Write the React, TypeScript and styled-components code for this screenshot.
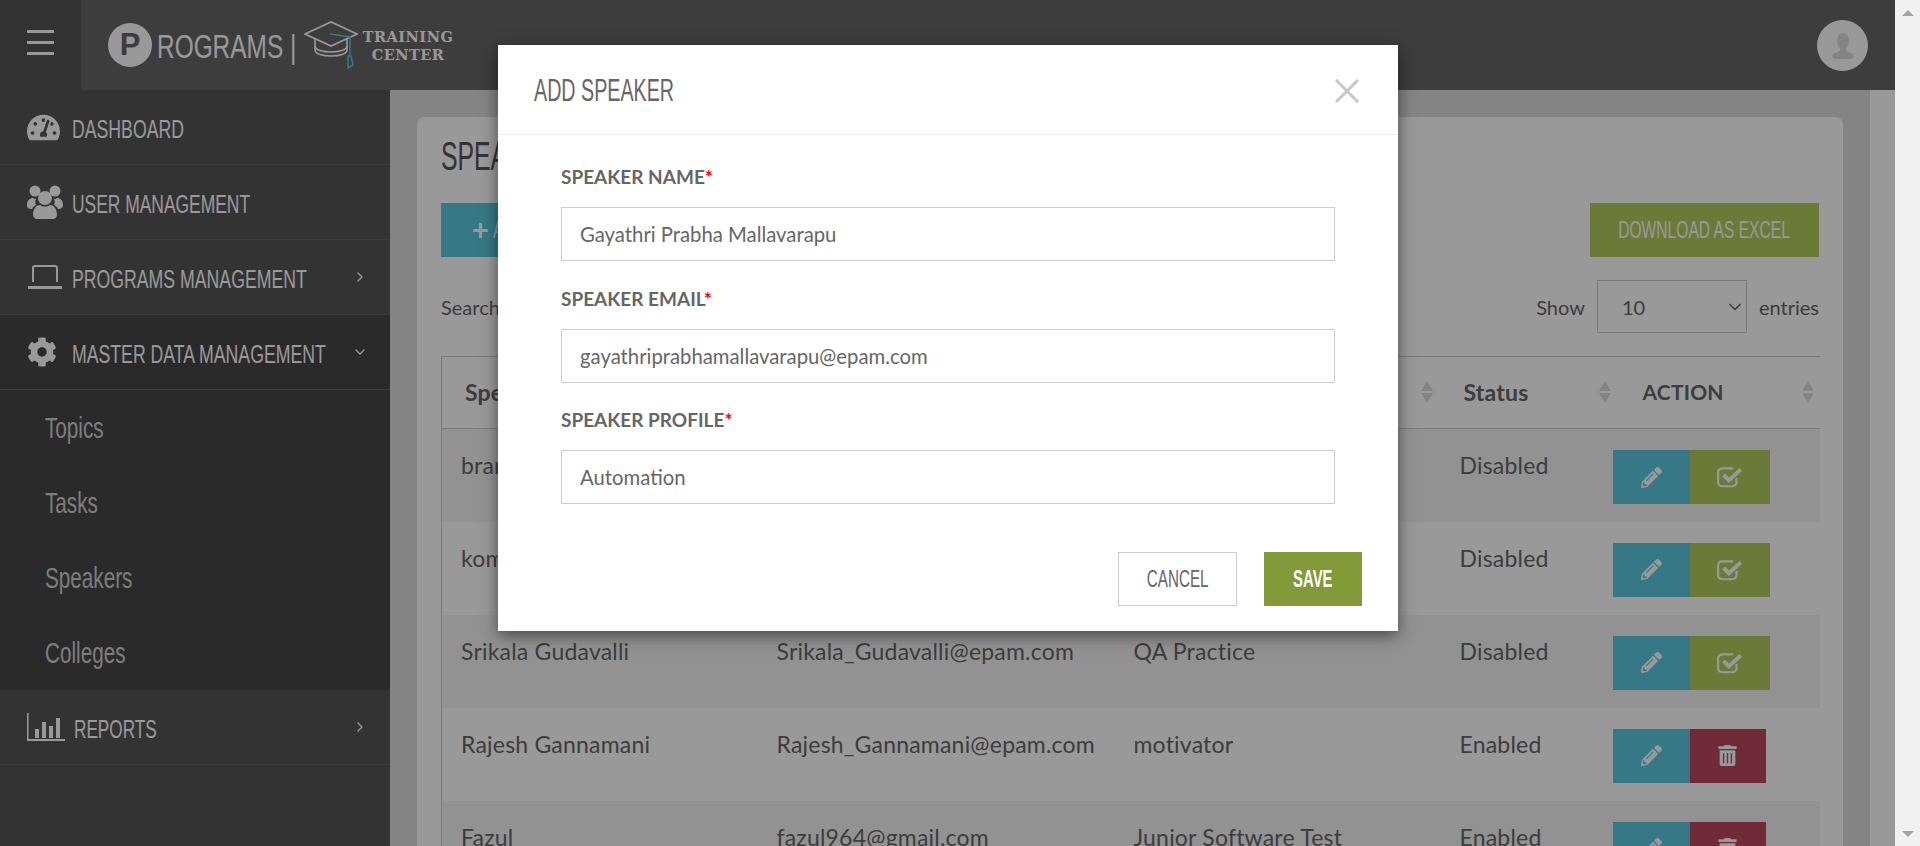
import React from "react";
import styled, { createGlobalStyle } from "styled-components";
import { FaTachometerAlt, FaCog, FaPencilAlt, FaTrashAlt, FaPlus } from "react-icons/fa";
import { FiChevronRight, FiChevronDown } from "react-icons/fi";

const GlobalStyle = createGlobalStyle`
  html, body { margin: 0; padding: 0; height: 100%; overflow: hidden; }
  body { font-family: "Lato", "Noto Sans", sans-serif; background: #f1f1f1; }
  * { box-sizing: border-box; }
`;

const Shell = styled.div`
  display: flex;
  height: 846px;
  width: 1920px;
  overflow: hidden;
`;

const Viewport = styled.div`
  position: relative;
  width: 1895px;
  height: 846px;
  overflow: hidden;
  background: #fff;
`;

const ScrollBar = styled.div`
  width: 25px;
  height: 846px;
  background: #f1f1f1;
  display: flex;
  flex-direction: column;
  justify-content: space-between;
  align-items: center;
  padding: 10px 0 9px;
`;

const Arrow = styled.span<{ $down?: boolean }>`
  width: 0;
  height: 0;
  border-left: 6px solid transparent;
  border-right: 6px solid transparent;
  ${({ $down }) =>
    $down ? "border-top: 6px solid #a3a3a3;" : "border-bottom: 6px solid #a3a3a3;"}
`;

// condensed heading face: no Oswald here, so Liberation Sans squeezed sideways
const Squeeze = styled.span<{ $size: number; $x: number; $origin?: string; $bold?: boolean }>`
  display: inline-block;
  font-family: "Liberation Sans", sans-serif;
  font-size: ${({ $size }) => $size}px;
  font-weight: ${({ $bold }) => ($bold ? "bold" : "normal")};
  line-height: 1;
  white-space: nowrap;
  transform: scaleX(${({ $x }) => $x});
  transform-origin: ${({ $origin }) => $origin || "left"} center;
`;

const Header = styled.header`
  height: 90px;
  background: #666;
  display: flex;
`;

const MenuCell = styled.div`
  width: 81px;
  background: #555;
  display: flex;
  flex-direction: column;
  gap: 8px;
  padding: 30px 0 0 27px;
`;

const MenuLine = styled.span`
  width: 27px;
  height: 3px;
  background: #fff;
`;

const Logo = styled.div`
  display: flex;
  align-items: center;
  padding-left: 27px;
  color: #fff;
`;

const LogoCircle = styled.span`
  width: 44px;
  height: 44px;
  border-radius: 50%;
  background: #fff;
  color: #666;
  font: bold 31px/44px "Liberation Sans", sans-serif;
  text-align: center;
  margin-right: 5px;
`;

const LogoWord = styled.div`
  width: 147px;
  margin-top: 3px;
`;

const LogoTraining = styled.div`
  font: bold 14.5px/17.500px "DejaVu Serif", serif;
  letter-spacing: 0.5px;
  text-align: center;
  width: 100px;
  margin: 1px 0 0;
`;

const Avatar = styled.div`
  margin: 20px 27px 0 auto;
  width: 51px;
  height: 51px;
  border-radius: 50%;
  background: #fff;
  display: flex;
  align-items: center;
  justify-content: center;
`;

const Layout = styled.div`
  display: flex;
  height: 756px;
`;

const Sidebar = styled.nav`
  width: 390px;
  flex: none;
  background: #555;
  color: #fff;
`;

const NavItem = styled.div`
  height: 75px;
  display: flex;
  align-items: center;
  padding: 0 22px 0 27px;
  border-bottom: 1px solid #616161;
`;

const NavIcon = styled.span<{ $gap?: number }>`
  width: ${({ $gap }) => $gap || 45}px;
  flex: none;
  display: flex;
  align-items: center;
  font-size: 33px;
`;

const NavText = styled.span`
  flex: 1;
  min-width: 0;
  margin-top: 3px;
`;

const NavGroup = styled.div`
  background: #464646;
`;

const SubItem = styled.div`
  height: 75px;
  padding-left: 45px;
  display: flex;
  align-items: center;
  color: #d0d0d0;
`;

const Main = styled.main`
  width: 1480px;
  background: #dcdcdc;
  padding: 27px 27px 0;
  overflow: hidden;
`;

const Card = styled.section`
  background: #fff;
  border-radius: 8px 8px 0 0;
  padding: 17px 24px 0;
  height: 800px;
  color: #666;
`;

const Title = styled.h1`
  margin: 0;
  padding-bottom: 26px;
  font-weight: normal;
  height: 69px;
  color: #555;
  display: flex;
  align-items: center;
`;

const ActionBar = styled.div`
  display: flex;
  justify-content: space-between;
`;

const AddButton = styled.button`
  width: 200px;
  height: 54px;
  border: 0;
  padding: 0 0 0 31px;
  background: #5ac9de;
  color: #fff;
  display: flex;
  align-items: center;
  gap: 4px;
  svg {
    flex: none;
  }
`;

const ExcelButton = styled.button`
  width: 229px;
  height: 54px;
  border: 0;
  padding: 0;
  background: #b4cb5d;
  color: #fff;
  display: flex;
  align-items: center;
  justify-content: center;
`;

const FilterRow = styled.div`
  display: flex;
  align-items: center;
  justify-content: space-between;
  height: 53px;
  margin-top: 23px;
  font-size: 20px;
`;

const Entries = styled.div`
  display: flex;
  align-items: center;
  gap: 12px;
`;

const FakeSelect = styled.div`
  width: 150px;
  height: 53px;
  border: 1px solid #ccc;
  display: flex;
  align-items: center;
  justify-content: space-between;
  padding: 0 1px 0 24px;
`;

const Table = styled.table`
  width: 1378px;
  margin-top: 23px;
  border-collapse: collapse;
  table-layout: fixed;
  border-top: 1px solid #ccc;
  border-left: 1px solid #ccc;
  font-size: 23px;
  letter-spacing: 0.2px;
`;

const HeadCell = styled.th<{ $left: number; $right: number; $size: number }>`
  height: 72px;
  padding: 0 ${({ $right }) => $right}px 2px ${({ $left }) => $left}px;
  border-bottom: 1px solid #ccc;
  font-size: ${({ $size }) => $size}px;
  font-weight: bold;
  text-align: left;
`;

const HeadInner = styled.div`
  display: flex;
  align-items: center;
  justify-content: space-between;
`;

const Row = styled.tr<{ $odd: boolean }>`
  height: 93px;
  background: ${({ $odd }) => ($odd ? "#f4f4f4" : "#fff")};
`;

const Cell = styled.td<{ $left?: number }>`
  padding: 22px 0 0 ${({ $left }) => $left ?? 19}px;
  vertical-align: top;
  white-space: nowrap;
  overflow: hidden;
`;

const ActionCell = styled.td`
  padding: 21px 0 0;
  vertical-align: top;
`;

const ActionGroup = styled.div`
  display: flex;
`;

const IconButton = styled.button<{ $bg: string; $width: number }>`
  width: ${({ $width }) => $width}px;
  height: 54px;
  border: 0;
  padding: 0;
  background: ${({ $bg }) => $bg};
  color: #fff;
  font-size: 21px;
  display: flex;
  align-items: center;
  justify-content: center;
`;

const Overlay = styled.div`
  position: absolute;
  inset: 0;
  background: rgba(0, 0, 0, 0.4);
`;

const Modal = styled.div`
  position: absolute;
  left: 498px;
  top: 45px;
  width: 900px;
  height: 586px;
  background: #fff;
  box-shadow: 0 5px 15px rgba(0, 0, 0, 0.5);
  color: #666;
`;

const ModalHeader = styled.div`
  height: 90px;
  border-bottom: 1px solid #eee;
  display: flex;
  align-items: center;
  justify-content: space-between;
  padding: 2px 39px 0 36px;
`;

const ModalBody = styled.div`
  padding: 28px 63px 0;
  display: flex;
  flex-direction: column;
  gap: 23.700px;
`;

const Field = styled.div`
  display: flex;
  flex-direction: column;
`;

const FieldLabel = styled.label`
  font-size: 19px;
  font-weight: bold;
  line-height: 28px;
  margin-bottom: 16px;
  text-transform: uppercase;
`;

const Required = styled.span`
  color: #f00;
`;

const FieldInput = styled.input`
  height: 54px;
  width: 100%;
  border: 1px solid #ccc;
  padding: 0 18px;
  font: 20.3px "Lato", sans-serif;
  color: #666;
  outline: 0;
`;

const ModalFooter = styled.div`
  display: flex;
  justify-content: flex-end;
  gap: 27px;
  padding: 48px 36px 0 0;
`;

const CancelButton = styled.button`
  width: 119px;
  height: 54px;
  background: #fff;
  border: 1px solid #ccc;
  color: #666;
  padding: 0;
`;

const SaveButton = styled.button`
  width: 98px;
  height: 54px;
  background: #829a38;
  border: 0;
  color: #fff;
  padding: 0;
`;

const teal = "#5ac9de";
const olive = "#b4cb5d";
const crimson = "#bb4661";

const rows = [
  { name: "bran", email: "", profile: "", status: "Disabled" },
  { name: "kom", email: "", profile: "", status: "Disabled" },
  { name: "Srikala Gudavalli", email: "Srikala_Gudavalli@epam.com", profile: "QA Practice", status: "Disabled" },
  { name: "Rajesh Gannamani", email: "Rajesh_Gannamani@epam.com", profile: "motivator", status: "Enabled" },
  { name: "Fazul", email: "fazul964@gmail.com", profile: "Junior Software Test", status: "Enabled" },
];

const columns = [
  { label: "Speaker Name", left: 23, right: 8, size: 23 },
  { label: "Speaker Email", left: 19, right: 8, size: 23 },
  { label: "Speaker Profile", left: 19, right: 8, size: 23 },
  { label: "Status", left: 22, right: 1, size: 23 },
  { label: "ACTION", left: 30, right: 5, size: 21 },
];

const SortIcon = () => (
  <svg width="14" height="24" viewBox="0 0 14 24" fill="#ddd">
    <path d="M7 1l6 10H1zM7 23l-6-10h12z" />
  </svg>
);

const UsersIcon = () => (
  <svg width="36" height="34" viewBox="0 0 36 34" fill="currentColor">
    <circle cx="8" cy="6" r="5.500" />
    <circle cx="28" cy="6" r="5.500" />
    <circle cx="18" cy="13" r="7" />
    <path d="M0 20c0-5 3-7 6-7 1 1 2 1 3 1-1 2-1 4 0 6-2 1-3 2-4 4-3 0-5-1-5-4z" />
    <path d="M36 20c0-5-3-7-6-7-1 1-2 1-3 1 1 2 1 4 0 6 2 1 3 2 4 4 3 0 5-1 5-4z" />
    <path d="M6 30c0-6 3-10 7-10 3 2 7 2 10 0 4 0 7 4 7 10 0 2-2 4-4 4H10c-2 0-4-2-4-4z" />
  </svg>
);

const LaptopIcon = () => (
  <svg width="36" height="24" viewBox="0 0 36 24" fill="none" stroke="currentColor" strokeWidth="2">
    <path d="M6 17V3a2 2 0 0 1 2-2h20a2 2 0 0 1 2 2v14" />
    <path d="M1 22.500h34" strokeWidth="3" />
  </svg>
);

const BarsIcon = () => (
  <svg width="38" height="28" viewBox="0 0 38 28" fill="currentColor">
    <path d="M0 0h1.500v26H38v2H0z" />
    <path d="M8 16h4v9H8zM15 9h4v16h-4zM22 13h4v12h-4zM29 5h4v20h-4z" />
  </svg>
);

const CheckSquareIcon = () => (
  <svg width="26" height="22" viewBox="0 0 24 20" fill="none" stroke="currentColor">
    <path d="M18 11v4a3.500 3.500 0 0 1-3.500 3.500H4.500A3.500 3.500 0 0 1 1 15V5.500A3.500 3.500 0 0 1 4.500 2H15" strokeWidth="2" />
    <path d="M6 8l5 5L22 3" strokeWidth="3.600" />
  </svg>
);

const CapIcon = () => (
  <svg width="54" height="48" viewBox="0 0 54 48" fill="none" stroke="#fff" strokeWidth="1.600">
    <path d="M1 13 27 1l26 12-26 12z" />
    <path d="M11 18v11c0 8 32 8 32 0V18" />
    <path d="M11 25c0 8 32 8 32 0" />
    <path d="M26 13l20 3v18" stroke="#5ac9de" />
    <path d="M44 35h3l2 9-5 3z" stroke="#5ac9de" />
  </svg>
);

const PersonIcon = () => (
  <svg width="22" height="26" viewBox="0 0 22 26" fill="#dcdcdc">
    <ellipse cx="11" cy="8" rx="6" ry="8" />
    <path d="M8 14h6v4l7 3c1 2 1 5-2 5H3c-3 0-3-3-2-5l7-3z" />
  </svg>
);

const CloseIcon = () => (
  <svg width="24" height="24" viewBox="0 0 24 24" stroke="#c8c8c8" strokeWidth="3">
    <path d="M1 1l22 22M23 1L1 23" />
  </svg>
);

export default function App() {
  return (
    <>
      <GlobalStyle />
      <Shell>
        <Viewport>
          <Header>
            <MenuCell>
              <MenuLine />
              <MenuLine />
              <MenuLine />
            </MenuCell>
            <Logo>
              <LogoCircle>P</LogoCircle>
              <LogoWord>
                <Squeeze $size={33} $x={0.74}>ROGRAMS |</Squeeze>
              </LogoWord>
              <CapIcon />
              <LogoTraining>
                TRAINING
                <br />
                CENTER
              </LogoTraining>
            </Logo>
            <Avatar>
              <PersonIcon />
            </Avatar>
          </Header>
          <Layout>
            <Sidebar>
              <NavItem>
                <NavIcon><FaTachometerAlt /></NavIcon>
                <NavText><Squeeze $size={26} $x={0.68}>DASHBOARD</Squeeze></NavText>
              </NavItem>
              <NavItem>
                <NavIcon><UsersIcon /></NavIcon>
                <NavText><Squeeze $size={26} $x={0.67}>USER MANAGEMENT</Squeeze></NavText>
              </NavItem>
              <NavItem>
                <NavIcon><LaptopIcon /></NavIcon>
                <NavText><Squeeze $size={26} $x={0.68}>PROGRAMS MANAGEMENT</Squeeze></NavText>
                <FiChevronRight size={16} />
              </NavItem>
              <NavGroup>
                <NavItem>
                  <NavIcon><FaCog size={30} /></NavIcon>
                  <NavText><Squeeze $size={26} $x={0.68}>MASTER DATA MANAGEMENT</Squeeze></NavText>
                  <FiChevronDown size={16} />
                </NavItem>
                <SubItem><Squeeze $size={30} $x={0.69}>Topics</Squeeze></SubItem>
                <SubItem><Squeeze $size={30} $x={0.69}>Tasks</Squeeze></SubItem>
                <SubItem><Squeeze $size={30} $x={0.69}>Speakers</Squeeze></SubItem>
                <SubItem><Squeeze $size={30} $x={0.69}>Colleges</Squeeze></SubItem>
              </NavGroup>
              <NavItem>
                <NavIcon $gap={47}><BarsIcon /></NavIcon>
                <NavText><Squeeze $size={26} $x={0.66}>REPORTS</Squeeze></NavText>
                <FiChevronRight size={16} />
              </NavItem>
            </Sidebar>
            <Main>
              <Card>
                <Title><Squeeze $size={40} $x={0.62}>SPEAKERS</Squeeze></Title>
                <ActionBar>
                  <AddButton>
                    <FaPlus size={17} />
                    <Squeeze $size={24} $x={0.66}>ADD SPEAKER</Squeeze>
                  </AddButton>
                  <ExcelButton>
                    <Squeeze $size={24} $x={0.65} $origin="center">DOWNLOAD AS EXCEL</Squeeze>
                  </ExcelButton>
                </ActionBar>
                <FilterRow>
                  <span>Search:</span>
                  <Entries>
                    <span>Show</span>
                    <FakeSelect>
                      10
                      <FiChevronDown size={20} />
                    </FakeSelect>
                    <span>entries</span>
                  </Entries>
                </FilterRow>
                <Table>
                  <colgroup>
                    <col width="316" />
                    <col width="357" />
                    <col width="327" />
                    <col width="171" />
                    <col width="207" />
                  </colgroup>
                  <thead>
                    <tr>
                      {columns.map((c) => (
                        <HeadCell key={c.label} $left={c.left} $right={c.right} $size={c.size}>
                          <HeadInner>
                            {c.label}
                            <SortIcon />
                          </HeadInner>
                        </HeadCell>
                      ))}
                    </tr>
                  </thead>
                  <tbody>
                    {rows.map((r, i) => (
                      <Row key={r.name} $odd={i % 2 === 0}>
                        <Cell>{r.name}</Cell>
                        <Cell>{r.email}</Cell>
                        <Cell>{r.profile}</Cell>
                        <Cell $left={18}>{r.status}</Cell>
                        <ActionCell>
                          <ActionGroup>
                            <IconButton $bg={teal} $width={77}><FaPencilAlt /></IconButton>
                            {r.status === "Disabled" ? (
                              <IconButton $bg={olive} $width={80}><CheckSquareIcon /></IconButton>
                            ) : (
                              <IconButton $bg={crimson} $width={76}><FaTrashAlt /></IconButton>
                            )}
                          </ActionGroup>
                        </ActionCell>
                      </Row>
                    ))}
                  </tbody>
                </Table>
              </Card>
            </Main>
          </Layout>
          <Overlay />
          <Modal>
            <ModalHeader>
              <Squeeze $size={31} $x={0.635}>ADD SPEAKER</Squeeze>
              <CloseIcon />
            </ModalHeader>
            <ModalBody>
              <Field>
                <FieldLabel>Speaker Name<Required>*</Required></FieldLabel>
                <FieldInput readOnly value="Gayathri Prabha Mallavarapu" />
              </Field>
              <Field>
                <FieldLabel>Speaker Email<Required>*</Required></FieldLabel>
                <FieldInput readOnly value="gayathriprabhamallavarapu@epam.com" />
              </Field>
              <Field>
                <FieldLabel>Speaker Profile<Required>*</Required></FieldLabel>
                <FieldInput readOnly value="Automation" />
              </Field>
            </ModalBody>
            <ModalFooter>
              <CancelButton><Squeeze $size={24} $x={0.635} $origin="center">CANCEL</Squeeze></CancelButton>
              <SaveButton><Squeeze $size={24} $x={0.62} $origin="center" $bold>SAVE</Squeeze></SaveButton>
            </ModalFooter>
          </Modal>
        </Viewport>
        <ScrollBar>
          <Arrow />
          <Arrow $down />
        </ScrollBar>
      </Shell>
    </>
  );
}
